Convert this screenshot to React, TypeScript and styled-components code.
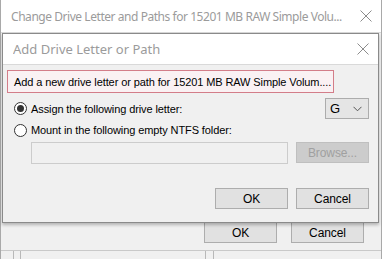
import styled, { createGlobalStyle } from "styled-components";

const GlobalStyle = createGlobalStyle`
  html, body {
    margin: 0;
    padding: 0;
    background: #f0f0f0;
  }
  * {
    box-sizing: border-box;
  }
`;

const Desktop = styled.div`
  position: relative;
  width: 382px;
  height: 259px;
  overflow: hidden;
  background: #f0f0f0;
  font-family: "Liberation Sans", Arial, sans-serif;
  font-size: 11px;
  letter-spacing: -0.1px;
  color: #000;
`;

const OuterWindow = styled.div`
  display: flex;
  flex-direction: column;
  width: 382px;
  height: 259px;
  border-left: 1px solid #a9a9a9;
  border-right: 1px solid #a9a9a9;
`;

const TitleBar = styled.div`
  display: flex;
  align-items: center;
  justify-content: space-between;
  height: ${(p: { h: number }) => p.h}px;
  flex-shrink: 0;
  padding: 0 9px 0 10px;
  background: #fff;
  border-bottom: 1px solid #d9d9d9;
`;

const TitleText = styled.span<{ tight?: boolean }>`
  font-family: "Noto Sans", "Open Sans", sans-serif;
  font-size: ${(p) => (p.tight ? 12 : 13)}px;
  letter-spacing: ${(p) => (p.tight ? -0.45 : 0)}px;
  color: #9b9b9b;
  white-space: nowrap;
  overflow: hidden;
`;

const OuterBody = styled.div`
  flex: 1;
  display: flex;
  flex-direction: column;
  justify-content: flex-end;
`;

const ButtonRow = styled.div`
  display: flex;
  justify-content: flex-end;
  gap: ${(p: { gap: number }) => p.gap}px;
`;

const OuterButtons = styled(ButtonRow)`
  padding-right: 17px;
  margin-bottom: 7px;
`;

const Button = styled.div<{ disabled?: boolean }>`
  width: 73px;
  height: 21px;
  display: flex;
  align-items: center;
  justify-content: center;
  font-size: 12px;
  background: ${(p) => (p.disabled ? "#cccccc" : "#e1e1e1")};
  border: 1px solid ${(p) => (p.disabled ? "#bfbfbf" : "#adadad")};
  color: ${(p) => (p.disabled ? "#a0a0a0" : "#000")};
`;

const ListStrip = styled.div`
  height: 9px;
  border-top: 1px solid #c9c9c9;
  display: flex;
`;

const ListCol = styled.div`
  width: ${(p: { w: number }) => p.w}px;
  border-right: 1px solid #b8b8b8;
  flex-shrink: 0;
`;

const Dialog = styled.div`
  position: absolute;
  left: 2px;
  top: 33px;
  width: 377px;
  height: 190px;
  display: flex;
  flex-direction: column;
  background: #f0f0f0;
  border: 1px solid #8a8a8a;
  box-shadow: 0 2px 3px rgba(0, 0, 0, 0.25);
`;

const DialogBody = styled.div`
  display: flex;
  flex-direction: column;
  align-items: stretch;
  padding: 5px 9px 0 4px;
`;

const Notice = styled.div`
  align-self: flex-start;
  width: 327px;
  height: 23px;
  display: flex;
  align-items: center;
  padding-left: 6px;
  overflow: hidden;
  background: #faf1f3;
  border: 1px solid #d37d89;
  white-space: nowrap;
`;

const OptionRow = styled.div`
  display: flex;
  align-items: center;
  justify-content: space-between;
  height: ${(p: { h: number }) => p.h}px;
  margin-top: ${(p: { h: number; mt: number }) => p.mt}px;
`;

const RadioLabel = styled.label`
  display: flex;
  align-items: center;
  gap: 4px;
  padding-left: 7px;
`;

const Radio = styled.span<{ checked?: boolean }>`
  width: 13px;
  height: 13px;
  border-radius: 50%;
  border: 1px solid #333;
  background: #fff;
  display: flex;
  align-items: center;
  justify-content: center;
  &::after {
    content: "";
    width: 7px;
    height: 7px;
    border-radius: 50%;
    background: ${(p) => (p.checked ? "#333" : "transparent")};
  }
`;

const Combo = styled.div`
  width: 44px;
  height: 21px;
  display: flex;
  align-items: center;
  justify-content: space-between;
  padding: 0 6px 0 4px;
  background: #e5e5e5;
  border: 1px solid #acacac;
  font-size: 13px;
`;

const FolderRow = styled.div`
  display: flex;
  justify-content: space-between;
  margin-top: 4px;
  padding-left: 24px;
`;

const FolderInput = styled.div`
  width: 257px;
  height: 22px;
  background: #f0f0f0;
  border: 1px solid #cccccc;
`;

const DialogButtons = styled(ButtonRow)`
  margin-top: 24px;
`;

const CloseIcon = () => (
  <svg width="12" height="12" viewBox="0 0 12 12">
    <path d="M0.5 0.5 L11.5 11.5 M11.5 0.5 L0.5 11.5" stroke="#8c8c8c" strokeWidth="1" fill="none" />
  </svg>
);

const Chevron = () => (
  <svg width="9" height="6" viewBox="0 0 9 6">
    <path d="M0.5 0.8 L4.5 4.8 L8.5 0.8" stroke="#555" strokeWidth="1" fill="none" />
  </svg>
);

export default function App() {
  return (
    <Desktop>
      <GlobalStyle />
      <OuterWindow>
        <TitleBar h={33}>
          <TitleText tight>Change Drive Letter and Paths for 15201 MB RAW Simple Volu...</TitleText>
          <CloseIcon />
        </TitleBar>
        <OuterBody>
          <OuterButtons gap={14}>
            <Button>OK</Button>
            <Button>Cancel</Button>
          </OuterButtons>
          <ListStrip>
            <ListCol w={13} />
            <ListCol w={7} />
            <ListCol w={185} />
            <ListCol w={8} />
          </ListStrip>
        </OuterBody>
      </OuterWindow>

      <Dialog>
        <TitleBar h={31}>
          <TitleText>Add Drive Letter or Path</TitleText>
          <CloseIcon />
        </TitleBar>
        <DialogBody>
          <Notice>Add a new drive letter or path for 15201 MB RAW Simple Volum....</Notice>
          <OptionRow h={21} mt={5}>
            <RadioLabel>
              <Radio checked />
              Assign the following drive letter:
            </RadioLabel>
            <Combo>
              G
              <Chevron />
            </Combo>
          </OptionRow>
          <OptionRow h={16} mt={3}>
            <RadioLabel>
              <Radio />
              Mount in the following empty NTFS folder:
            </RadioLabel>
          </OptionRow>
          <FolderRow>
            <FolderInput />
            <Button disabled>Browse...</Button>
          </FolderRow>
          <DialogButtons gap={8}>
            <Button>OK</Button>
            <Button>Cancel</Button>
          </DialogButtons>
        </DialogBody>
      </Dialog>
    </Desktop>
  );
}
